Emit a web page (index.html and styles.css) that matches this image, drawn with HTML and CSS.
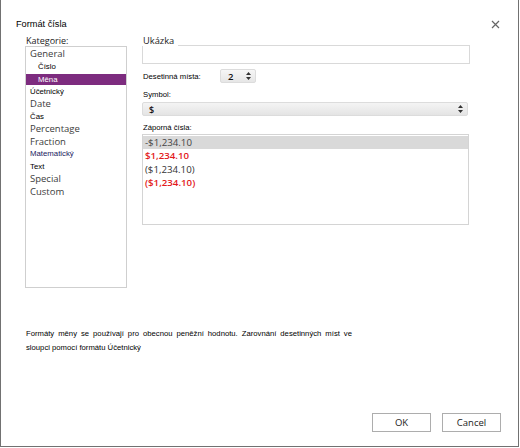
FILE: index.html
```html
<!DOCTYPE html>
<html>
<head>
<meta charset="utf-8">
<link rel="stylesheet" href="styles.css">
</head>
<body>
<div class="dialog">
  <div class="header">
    <div class="title">Formát čísla</div>
    <svg class="close" width="9" height="9" viewBox="0 0 9 9"><path d="M1 1 L8 8 M8 1 L1 8" stroke="#666" stroke-width="1.2" fill="none"/></svg>
  </div>
  <div class="main">
    <div class="left">
      <div class="cat-label">Kategorie:</div>
      <div class="catlist">
        <div class="cat big">General</div>
        <div class="cat small sub">Číslo</div>
        <div class="cat small sub selected">Měna</div>
        <div class="cat small">Účetnický</div>
        <div class="cat big">Date</div>
        <div class="cat small">Čas</div>
        <div class="cat big">Percentage</div>
        <div class="cat big">Fraction</div>
        <div class="cat small math">Matematický</div>
        <div class="cat small">Text</div>
        <div class="cat big">Special</div>
        <div class="cat big">Custom</div>
      </div>
    </div>
    <div class="right">
      <div class="sample-head"><span class="sample-label">Ukázka</span><span class="sample-line"></span></div>
      <div class="sample-box"></div>
      <div class="dec-row">
        <span class="tiny dec-label">Desetinná místa:</span>
        <div class="spinner"><span>2</span>
          <svg width="5" height="8" viewBox="0 0 5 8"><path d="M2.5 0 L5 3 L0 3 Z M0 5 L5 5 L2.5 8 Z" fill="#333"/></svg>
        </div>
      </div>
      <div class="tiny field-label">Symbol:</div>
      <div class="select"><span>$</span>
        <svg width="5" height="8" viewBox="0 0 5 8"><path d="M2.5 0 L5 3 L0 3 Z M0 5 L5 5 L2.5 8 Z" fill="#333"/></svg>
      </div>
      <div class="tiny field-label neg-label">Záporná čísla:</div>
      <div class="neglist">
        <div class="neg hl">-$1,234.10</div>
        <div class="neg red">$1,234.10</div>
        <div class="neg">($1,234.10)</div>
        <div class="neg red">($1,234.10)</div>
      </div>
    </div>
  </div>
  <div class="desc">
    <div class="desc1">Formáty měny se používají pro obecnou peněžní hodnotu. Zarovnání desetinných míst ve</div>
    <div class="desc2">sloupci pomocí formátu Účetnický</div>
  </div>
  <div class="footer">
    <button class="btn">OK</button>
    <button class="btn">Cancel</button>
  </div>
</div>
</body>
</html>
```

FILE: styles.css
```css
* { box-sizing: border-box; }
html, body { margin: 0; padding: 0; background: #fff; }
body { font-family: "Open Sans", "Liberation Sans", sans-serif; }

.dialog {
  width: 519px;
  height: 447px;
  border-left: 1px solid #717171;
  border-right: 1px solid #717171;
  border-bottom: 1px solid #717171;
  display: flex;
  flex-direction: column;
  background: #fff;
}

.header {
  height: 35px;
  display: flex;
  justify-content: space-between;
  align-items: flex-start;
  padding: 17px 18px 0 15px;
}
.title {
  font-family: "Liberation Sans", sans-serif;
  font-size: 9.2px;
  line-height: 14px;
  color: #000;
}
.close { margin-top: 3px; }

.main {
  display: flex;
  padding-left: 24px;
}
.left { width: 102px; }
.cat-label {
  height: 11px;
  line-height: 11px;
  font-size: 9px;
  color: #222;
  padding-left: 1px;
}
.catlist {
  height: 242px;
  border: 1px solid #cfcfcf;
  padding-top: 1px;
}
.cat {
  height: 12.5px;
  line-height: 12.5px;
  white-space: nowrap;
}
.cat.big {
  font-size: 9.5px;
  color: #3c3c3c;
  padding-left: 4px;
}
.cat.small {
  font-family: "Liberation Sans", sans-serif;
  font-size: 7.8px;
  color: #000;
  padding-left: 4px;
}
.cat.sub { padding-left: 12px; }
.cat.selected {
  background: #7d2c7f;
  color: #fff;
  height: 11.5px;
  line-height: 11.5px;
  margin: 0.5px 0 0.5px 0;
}
.cat.math { color: #202060; }

.right {
  margin-left: 15px;
  width: 328px;
}
.sample-head {
  height: 11px;
  display: flex;
  align-items: flex-end;
}
.sample-label {
  font-size: 9.3px;
  line-height: 11px;
  color: #222;
  padding-left: 1px;
  padding-right: 4px;
}
.sample-line {
  flex: 1;
  border-bottom: 1px solid #d9d9d9;
}
.sample-box {
  height: 18px;
  border: 1px solid #d9d9d9;
  border-top: none;
}
.tiny {
  font-family: "Liberation Sans", sans-serif;
  font-size: 7.7px;
  color: #000;
}
.dec-row {
  margin-top: 5px;
  height: 14px;
  display: flex;
  align-items: center;
}
.dec-label {
  width: 78px;
  padding-left: 1px;
}
.spinner {
  width: 36px;
  height: 14px;
  border: 1px solid #dcdcdc;
  border-radius: 2px;
  background: linear-gradient(#f6f6f6, #e6e6e6);
  display: flex;
  align-items: center;
  justify-content: space-between;
  padding: 0 4px 0 7px;
  font-size: 9.5px;
  font-weight: 600;
  color: #111;
}
.field-label {
  margin-top: 6px;
  height: 11px;
  line-height: 11px;
  padding-left: 1px;
}
.select {
  margin-top: 2px;
  width: 326px;
  height: 14px;
  border: 1px solid #dcdcdc;
  border-radius: 2px;
  background: linear-gradient(#f4f4f4, #e4e4e4);
  display: flex;
  align-items: center;
  justify-content: space-between;
  padding: 0 4px 0 6px;
  font-size: 9px;
  font-weight: 600;
  color: #111;
}
.neg-label { margin-top: 6px; }
.neglist {
  margin-top: 1px;
  width: 327px;
  height: 91px;
  border: 1px solid #d4d4d4;
  padding-top: 1px;
}
.neg {
  height: 13.3px;
  line-height: 13.3px;
  font-size: 9.7px;
  color: #333;
  padding-left: 2px;
}
.neg.hl { background: #d9d9d9; color: #444; }
.neg.red { color: #e3191b; font-weight: 600; }

.desc {
  margin-top: 39px;
  padding-left: 25px;
  font-family: "Liberation Sans", sans-serif;
  font-size: 7.7px;
  color: #000;
}
.desc1 {
  width: 326px;
  line-height: 14px;
  text-align: justify;
  text-align-last: justify;
  white-space: nowrap;
}
.desc2 { line-height: 14px; }

.footer {
  margin-top: auto;
  display: flex;
  justify-content: flex-end;
  gap: 11px;
  padding: 0 17px 14px 0;
}
.btn {
  width: 59px;
  height: 19px;
  margin: 0;
  padding: 0;
  border: 1px solid #adadad;
  background: #fff;
  font-family: "Open Sans", sans-serif;
  font-size: 9.5px;
  color: #222;
}
```
